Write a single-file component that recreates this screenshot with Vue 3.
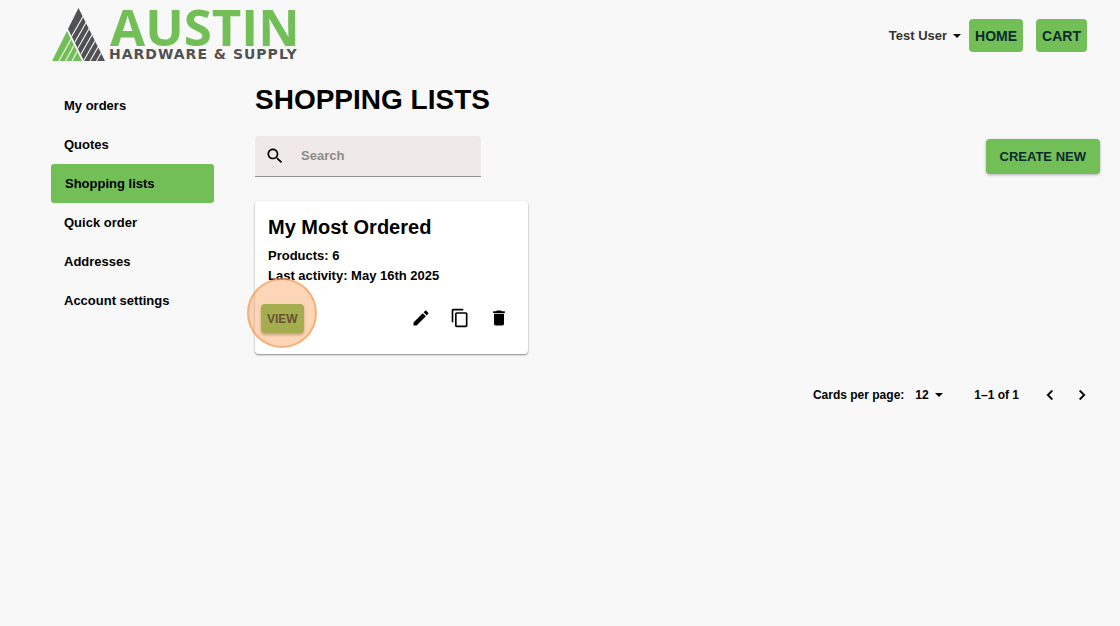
<script setup>
import { ref } from 'vue'

const links = ['My orders', 'Quotes', 'Shopping lists', 'Quick order', 'Addresses', 'Account settings']
const active = 'Shopping lists'
const search = ref('')
const perPage = ref('12')
</script>

<template>
  <div class="page">
    <header class="header">
      <a href="#" class="logo" aria-label="Austin Hardware &amp; Supply">
        <svg class="mark" viewBox="0 0 53 53" width="53" height="53" aria-hidden="true">
          <defs>
            <clipPath id="peak"><path d="M26.500 0 L53 53 H32 L16 21 Z" /></clipPath>
            <clipPath id="slope"><path d="M15 23 L30 53 H0 Z" /></clipPath>
          </defs>
          <g clip-path="url(#peak)">
            <path d="M0 0H53V53H0Z" fill="#505153" />
            <path d="M5.500 53l31-54 M12 53l31-54 M18.500 53l31-54 M25 53l31-54 M31.500 53l31-54 M38 53l31-54 M44.500 53l31-54" stroke="#f8f8f8" stroke-width="1.100" />
          </g>
          <g clip-path="url(#slope)">
            <path d="M0 0H53V53H0Z" fill="#72bf58" />
            <path d="M7 53l18-33 M13.500 53l18-33 M20 53l18-33" stroke="#f8f8f8" stroke-width="1.100" />
          </g>
        </svg>
        <span class="words">
          <span class="brand">AUSTIN</span>
          <span class="tagline">HARDWARE &amp; SUPPLY</span>
        </span>
      </a>
      <div class="actions">
        <button class="user" type="button">
          Test User
          <svg viewBox="0 0 8 4" width="8" height="4" aria-hidden="true"><path d="M0 0H8L4 4Z" /></svg>
        </button>
        <button class="btn top" type="button">HOME</button>
        <button class="btn top" type="button">CART</button>
      </div>
    </header>

    <div class="body">
      <nav class="nav">
        <a v-for="l in links" :key="l" href="#" :class="{ active: l === active }">{{ l }}</a>
      </nav>

      <main class="main">
        <h1>SHOPPING LISTS</h1>
        <div class="toolbar">
          <label class="search">
            <svg viewBox="0 0 24 24" width="20" height="20" aria-hidden="true"><path d="M15.500 14h-.79l-.28-.27C15.410 12.590 16 11.110 16 9.500 16 5.910 13.090 3 9.500 3S3 5.910 3 9.500 5.910 16 9.500 16c1.610 0 3.090-.59 4.230-1.570l.27.28v.79l5 4.990L20.490 19l-4.990-5zm-6 0C7.010 14 5 11.990 5 9.500S7.010 5 9.500 5 14 7.010 14 9.500 11.990 14 9.500 14z" /></svg>
            <input v-model="search" type="text" placeholder="Search" aria-label="Search" />
          </label>
          <button class="btn create" type="button">CREATE NEW</button>
        </div>

        <article class="card">
          <h2>My Most Ordered</h2>
          <p>Products: 6</p>
          <p>Last activity: May 16th 2025</p>
          <div class="card-actions">
            <div class="view-wrap">
              <button class="btn view" type="button">VIEW</button>
              <span class="halo"></span>
            </div>
            <button class="icon" type="button" aria-label="Edit">
              <svg viewBox="0 0 24 24" width="20" height="20"><path d="M3 17.250V21h3.750L17.810 9.940l-3.750-3.750L3 17.250zM20.710 7.040c.39-.39.39-1.020 0-1.410l-2.340-2.340a1 1 0 0 0-1.410 0l-1.830 1.830 3.750 3.750 1.830-1.830z" /></svg>
            </button>
            <button class="icon" type="button" aria-label="Copy">
              <svg viewBox="0 0 24 24" width="20" height="20"><path d="M16 1H4c-1.100 0-2 .9-2 2v14h2V3h12V1zm3 4H8c-1.100 0-2 .9-2 2v14c0 1.100.9 2 2 2h11c1.100 0 2-.9 2-2V7c0-1.100-.9-2-2-2zm0 16H8V7h11v14z" /></svg>
            </button>
            <button class="icon" type="button" aria-label="Delete">
              <svg viewBox="0 0 24 24" width="20" height="20"><path d="M6 19c0 1.100.9 2 2 2h8c1.100 0 2-.9 2-2V7H6v12zM19 4h-3.500l-1-1h-5l-1 1H5v2h14V4z" /></svg>
            </button>
          </div>
        </article>

        <div class="pager">
          <label for="per-page">Cards per page:</label>
          <span class="select">
            <select id="per-page" v-model="perPage">
              <option>12</option>
              <option>24</option>
              <option>48</option>
            </select>
            <svg viewBox="0 0 8 4" width="8" height="4" aria-hidden="true"><path d="M0 0H8L4 4Z" /></svg>
          </span>
          <span class="range">1–1 of 1</span>
          <button class="step" type="button" aria-label="Previous page">
            <svg viewBox="0 0 24 24" width="20" height="20"><path d="M15.410 7.410 14 6l-6 6 6 6 1.410-1.410L10.830 12z" stroke="currentColor" stroke-width="0.400" /></svg>
          </button>
          <button class="step" type="button" aria-label="Next page">
            <svg viewBox="0 0 24 24" width="20" height="20"><path d="M10 6 8.590 7.410 13.170 12l-4.580 4.590L10 18l6-6z" stroke="currentColor" stroke-width="0.400" /></svg>
          </button>
        </div>
      </main>
    </div>
  </div>
</template>

<style>
body {
  background: #f8f8f8;
}
</style>

<style scoped>
.page {
  font-family: "Liberation Sans", Arial, sans-serif;
  font-size: 13px;
  font-weight: 700;
  line-height: 20px;
  color: #000;
}
button,
input,
select {
  font: inherit;
  color: inherit;
  border: 0;
  background: none;
  padding: 0;
  margin: 0;
}
button {
  cursor: pointer;
}
a {
  color: inherit;
  text-decoration: none;
}
svg {
  display: block;
  flex: none;
  fill: currentColor;
}
.header {
  display: flex;
  justify-content: space-between;
  align-items: flex-start;
  padding: 8px 33px 0 52px;
}
.logo {
  display: flex;
}
.words {
  display: flex;
  flex-direction: column;
  margin-left: 4px;
}
.brand {
  font-family: "Open Sans", sans-serif;
  font-size: 51px;
  line-height: 36px;
  padding-left: 1px;
  color: #72bf58;
}
.tagline {
  font-family: "DejaVu Sans", sans-serif;
  font-size: 14px;
  line-height: 20px;
  letter-spacing: 1px;
  color: #505153;
}
.actions {
  display: flex;
  align-items: center;
  padding-top: 11px;
}
.user {
  display: flex;
  align-items: center;
  gap: 6px;
  margin-right: 8px;
  color: #333;
}
.user svg {
  color: #000;
}
.btn {
  border-radius: 4px;
  background: #72bf58;
  color: #0c2a2a;
}
.top {
  height: 33px;
  padding: 0 6px;
  font-size: 14px;
}
.top + .top {
  margin-left: 13px;
}
.body {
  display: flex;
  align-items: flex-start;
  gap: 41px;
  padding: 22px 20px 0 51px;
}
.nav {
  flex: none;
  width: 163px;
}
.nav a {
  display: block;
  padding: 0 13px;
  line-height: 39px;
  border-radius: 3px;
}
.nav .active {
  padding-left: 14px;
  background: #72bf58;
}
.main {
  flex: 1;
}
h1 {
  margin: 0;
  font-size: 28px;
  line-height: 28px;
}
.toolbar {
  display: flex;
  justify-content: space-between;
  align-items: center;
  margin-top: 22px;
}
.search {
  display: flex;
  align-items: center;
  box-sizing: border-box;
  width: 226px;
  height: 41px;
  padding: 0 10px;
  gap: 16px;
  border-radius: 4px 4px 0 0;
  border-bottom: 1px solid #969392;
  background: #efeae7;
}
.search input {
  flex: 1;
  min-width: 0;
  outline: 0;
}
.search input::placeholder {
  color: #8d8a88;
  opacity: 1;
}
.create {
  height: 35px;
  padding: 0 14px;
  box-shadow: 0 1px 3px rgba(0, 0, 0, 0.3);
}
.card {
  box-sizing: border-box;
  width: 273px;
  margin-top: 24px;
  padding: 13px 13px 16px;
  border-radius: 4px;
  background: #fff;
  box-shadow: 0 1px 2px rgba(0, 0, 0, 0.45);
}
h2 {
  margin: 0 0 6px;
  font-size: 20px;
  line-height: 26px;
}
p {
  margin: 0;
}
.card-actions {
  display: flex;
  align-items: center;
  margin: 13px -3px 0 -7px;
}
.view-wrap {
  position: relative;
  margin-right: auto;
}
.view {
  display: block;
  height: 29px;
  padding: 0 6px;
  font-size: 12px;
  box-shadow: 0 2px 3px rgba(0, 0, 0, 0.35);
}
.halo {
  position: absolute;
  left: -14px;
  top: -26px;
  box-sizing: border-box;
  width: 70px;
  height: 70px;
  border: 2px solid rgba(244, 150, 80, 0.6);
  border-radius: 50%;
  background: rgba(250, 146, 66, 0.38);
  pointer-events: none;
}
.icon {
  display: flex;
  justify-content: center;
  width: 39px;
  padding: 9px 0 10px;
}
.pager {
  display: flex;
  align-items: center;
  justify-content: flex-end;
  margin-top: 25px;
  padding-right: 2px;
  font-size: 12px;
}
.select {
  display: flex;
  align-items: center;
  gap: 6px;
  margin: 0 31px 0 11px;
}
select {
  appearance: none;
  outline: 0;
}
.range {
  margin-right: 15px;
}
.step {
  display: flex;
  justify-content: center;
  width: 32px;
  padding: 6px 0;
}
</style>
